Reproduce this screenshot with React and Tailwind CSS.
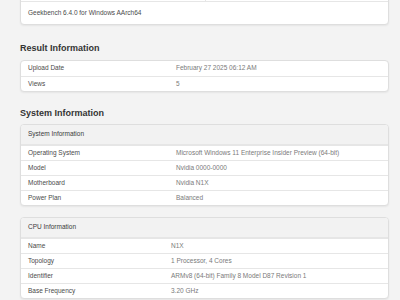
const resultRows = [
  ["Upload Date", "February 27 2025 06:12 AM"],
  ["Views", "5"],
];

const systemRows = [
  ["Operating System", "Microsoft Windows 11 Enterprise Insider Preview (64-bit)"],
  ["Model", "Nvidia 0000-0000"],
  ["Motherboard", "Nvidia N1X"],
  ["Power Plan", "Balanced"],
];

const cpuRows = [
  ["Name", "N1X"],
  ["Topology", "1 Processor, 4 Cores"],
  ["Identifier", "ARMv8 (64-bit) Family 8 Model D87 Revision 1"],
  ["Base Frequency", "3.20 GHz"],
];

function Row({ label, value, labelW }) {
  return (
    <div className="flex h-[15px] items-center border-t border-[#e6e6e6] first:border-t-0">
      <div className={`${labelW} shrink-0 pl-[7px] text-[#4a4a4a]`}>{label}</div>
      <div className="text-[#7a7a7a]">{value}</div>
    </div>
  );
}

function Card({ title, rows, labelW, className = "" }) {
  return (
    <div className={`overflow-hidden rounded-[4px] border border-[#dedede] bg-white shadow-[0_1px_2px_rgba(0,0,0,0.06)] ${className}`}>
      {title && (
        <div className="flex h-[20px] items-center border-b border-[#e6e6e6] bg-[#f2f2f2] pl-[7px] text-[#3a3a3a]">
          {title}
        </div>
      )}
      {rows.map(([l, v]) => (
        <Row key={l} label={l} value={v} labelW={labelW} />
      ))}
    </div>
  );
}

export default function App() {
  return (
    <div className="h-[300px] overflow-hidden bg-[#f3f3f3] px-[20px] pr-[11px] font-['Liberation_Sans',Arial,sans-serif] text-[6.5px] leading-none">
      {/* top card, mostly scrolled off */}
      <div className="-mt-[14px] overflow-hidden rounded-[4px] border border-[#dedede] bg-white shadow-[0_1px_2px_rgba(0,0,0,0.06)]">
        <div className="flex h-[15px] border-b border-[#e6e6e6]">
          <div className="w-[185px] border-r border-[#e6e6e6]"></div>
          <div></div>
        </div>
        <div className="flex h-[22px] items-center pl-[7px] text-[#4a4a4a]">
          Geekbench 6.4.0 for Windows AArch64
        </div>
      </div>

      <h2 className="mt-[17px] mb-[6px] text-[9px] font-bold leading-[12px] text-[#333]">
        Result Information
      </h2>
      <Card rows={resultRows} labelW="w-[155px]" />

      <h2 className="mt-[15px] mb-[5px] text-[9px] font-bold leading-[12px] text-[#333]">
        System Information
      </h2>
      <Card title="System Information" rows={systemRows} labelW="w-[155px]" />

      <Card title="CPU Information" rows={cpuRows} labelW="w-[150px]" className="mt-[11px]" />
    </div>
  );
}
